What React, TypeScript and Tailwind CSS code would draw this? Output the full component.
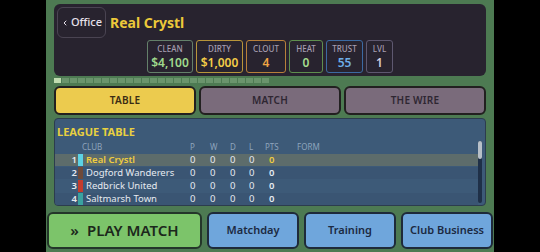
import { ChevronLeft } from 'lucide-react';

const STATS = [
  { label: 'CLEAN', value: '$4,100', w: 'w-[46px]', border: 'border-[#64806a]', color: 'text-[#9fd88c]' },
  { label: 'DIRTY', value: '$1,000', w: 'w-[47px]', border: 'border-[#b8953a]', color: 'text-[#f2cc48]' },
  { label: 'CLOUT', value: '4', w: 'w-[40px]', border: 'border-[#b8803a]', color: 'text-[#f0a444]' },
  { label: 'HEAT', value: '0', w: 'w-[34px]', border: 'border-[#5f8f4e]', color: 'text-[#a4dc8e]' },
  { label: 'TRUST', value: '55', w: 'w-[37px]', border: 'border-[#3c6aa2]', color: 'text-[#6eaee8]' },
  { label: 'LVL', value: '1', w: 'w-[27px]', border: 'border-[#5e5870]', color: 'text-[#d6cedc]' },
];

const ROWS = [
  { pos: 1, name: 'Real Crystl', swatch: 'bg-[#5cd2e4]', row: 'bg-[#5d6c6b]', text: 'text-[#f0cc40]', pts: 'text-[#f0cc40]' },
  { pos: 2, name: 'Dogford Wanderers', swatch: 'bg-[#6e4a3a]', row: 'bg-[#3a5573]', text: 'text-[#e6eaf0]', pts: 'text-[#e6eaf0]' },
  { pos: 3, name: 'Redbrick United', swatch: 'bg-[#c43c2c]', row: 'bg-[#3d5a78]', text: 'text-[#e6eaf0]', pts: 'text-[#e6eaf0]' },
  { pos: 4, name: 'Saltmarsh Town', swatch: 'bg-[#3aa2a0]', row: 'bg-[#3a5573]', text: 'text-[#e6eaf0]', pts: 'text-[#e6eaf0]' },
];

const SEGMENTS = Array.from({ length: 27 });

export default function App() {
  return (
    <div className="w-[540px] h-[252px] bg-black flex justify-center overflow-hidden" style={{ fontFamily: '"Noto Sans", "Open Sans", sans-serif' }}>
      <div className="w-[448px] h-full bg-[#4d7a52] flex flex-col">
        {/* header */}
        <div className="mx-2 mt-1 h-[72px] rounded-md bg-[#28232f] flex flex-col">
          <div className="flex items-center gap-1 pl-[3px] pt-[3px]">
            <div className="w-[49px] h-[31px] rounded-md border border-[#4a4452] flex items-center justify-center gap-[2px] text-[#e6e0ea] text-[11px] font-medium">
              <ChevronLeft className="size-[8px]" strokeWidth={3} />
              <span>Office</span>
            </div>
            <span className="text-[#ecc93a] font-bold text-[14px] leading-none">Real Crystl</span>
          </div>
          <div className="flex justify-center gap-[3px] mt-[2px]">
            {STATS.map((s) => (
              <div key={s.label} className={`${s.w} h-[33px] rounded-[3px] border ${s.border} flex flex-col items-center justify-center leading-none`}>
                <span className="text-[8px] text-[#a59db0] font-medium">{s.label}</span>
                <span className={`text-[12px] font-semibold mt-[4px] ${s.color}`}>{s.value}</span>
              </div>
            ))}
          </div>
        </div>

        {/* progress */}
        <div className="mx-2 mt-[2px] flex gap-[1px] h-[5px]">
          {SEGMENTS.map((_, i) => (
            <div key={i} className={`w-[7px] h-full ${i === 0 ? 'bg-[#c0dcb0]' : 'bg-[#6a946c]'}`} />
          ))}
        </div>

        {/* tabs */}
        <div className="mx-2 mt-[3px] grid grid-cols-3 gap-[3px] h-[29px]">
          <div className="rounded-md border-2 border-[#222020] bg-[#eccb4e] flex items-center justify-center text-[10px] font-semibold tracking-wide text-[#3a2c14]">TABLE</div>
          <div className="rounded-md border-2 border-[#222020] bg-[#7a6b7b] flex items-center justify-center text-[10px] font-semibold tracking-wide text-[#2e2632]">MATCH</div>
          <div className="rounded-md border-2 border-[#222020] bg-[#7a6b7b] flex items-center justify-center text-[10px] font-semibold tracking-wide text-[#2e2632]">THE WIRE</div>
        </div>

        {/* league table */}
        <div className="mx-2 mt-[3px] h-[88px] rounded-[4px] border border-[#2c3c4e] bg-[#3d5a78] overflow-hidden flex">
          <div className="flex-1 flex flex-col">
            <div className="text-[#e8d040] font-bold text-[11px] leading-none pl-[2px] pt-[7px]">LEAGUE TABLE</div>
            <div className="flex items-center h-[13px] mt-[4px] text-[8px] text-[#8ea4bc] leading-none">
              <span className="w-[135px] pl-[27px]">CLUB</span>
              <span className="w-[20px]">P</span>
              <span className="w-[20px]">W</span>
              <span className="w-[19px]">D</span>
              <span className="w-[16px]">L</span>
              <span className="w-[32px]">PTS</span>
              <span>FORM</span>
            </div>
            {ROWS.map((r) => (
              <div key={r.pos} className={`flex items-center h-[13px] mt-[1px] text-[9.5px] leading-none ${r.row}`}>
                <span className="w-[23px] text-right text-[#e6eaf0] font-semibold pr-[1px]">{r.pos}</span>
                <span className={`w-[5px] h-[12px] ${r.swatch}`} />
                <span className={`w-[107px] pl-[3px] ${r.text} ${r.pos === 1 ? 'font-semibold' : ''}`}>{r.name}</span>
                <span className="w-[20px] text-[#e6eaf0]">0</span>
                <span className="w-[20px] text-[#e6eaf0]">0</span>
                <span className="w-[19px] text-[#e6eaf0]">0</span>
                <span className="w-[16px] text-[#e6eaf0]">0</span>
                <span className={`w-[32px] pl-[4px] font-semibold ${r.pts}`}>0</span>
              </div>
            ))}
          </div>
          <div className="w-[4px] mr-[3px] mt-[22px] mb-[2px] bg-[#1f3048] rounded-full flex flex-col">
            <div className="h-[18px] bg-[#b8c0c8] rounded-full" />
          </div>
        </div>

        {/* bottom buttons */}
        <div className="mx-[1px] mt-[6px] flex gap-[5px] h-[37px]">
          <div className="w-[155px] rounded-md border-2 border-[#24362a] bg-[#7cc46a] flex items-center justify-center gap-2 text-[#1c281c] font-semibold text-[15px]">
            <span>»</span>
            <span>PLAY MATCH</span>
          </div>
          <div className="flex-1 rounded-md border-2 border-[#1e2a3a] bg-[#6fa6dc] flex items-center justify-center text-[#1c2a42] font-semibold text-[11px]">Matchday</div>
          <div className="flex-1 rounded-md border-2 border-[#1e2a3a] bg-[#6fa6dc] flex items-center justify-center text-[#1c2a42] font-semibold text-[11px]">Training</div>
          <div className="flex-1 rounded-md border-2 border-[#1e2a3a] bg-[#6fa6dc] flex items-center justify-center text-[#1c2a42] font-semibold text-[11px]">Club Business</div>
        </div>
      </div>
    </div>
  );
}
